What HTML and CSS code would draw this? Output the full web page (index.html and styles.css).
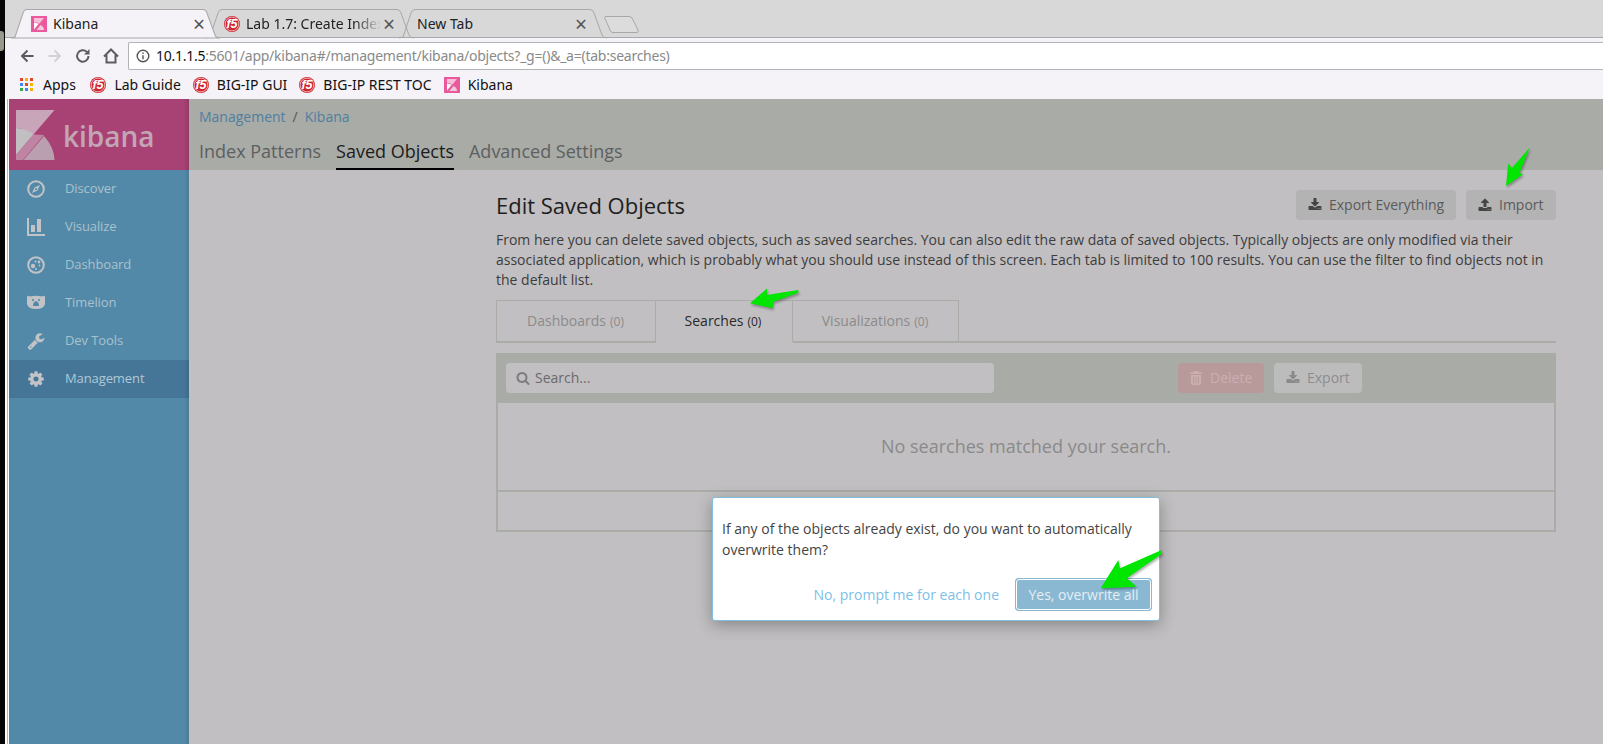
FILE: index.html
```html
<!DOCTYPE html>
<html lang="en">
<head>
<meta charset="utf-8">
<title>Kibana</title>
<link rel="stylesheet" href="styles.css">
</head>
<body>
<svg class="defs" width="0" height="0" aria-hidden="true">
  <symbol id="i-fav" viewBox="0 0 16 16">
    <rect width="16" height="16" fill="#e9599c"/>
    <path d="M3 2h10L8 8 6.400 6.500 3 6z" fill="#f7bfd9"/>
    <path d="M3 6.500Q6 6.500 7.500 8L3 13.500z" fill="#fff"/>
    <path d="M5.500 14l4-5Q13 10.500 13 14z" fill="#f5c9dd"/>
  </symbol>
  <symbol id="i-f5" viewBox="0 0 18 18">
    <circle cx="9" cy="9" r="9" fill="#cf2530"/>
    <circle cx="9" cy="9" r="7.700" fill="none" stroke="#fff" stroke-width=".7"/>
  </symbol>
  <symbol id="i-down" viewBox="0 0 1792 1792"><path fill="currentColor" d="M1344 1344q0-26-19-45t-45-19-45 19-19 45 19 45 45 19 45-19 19-45zm256 0q0-26-19-45t-45-19-45 19-19 45 19 45 45 19 45-19 19-45zm128-224v320q0 40-28 68t-68 28h-1472q-40 0-68-28t-28-68v-320q0-40 28-68t68-28h465l135 136q58 56 136 56t136-56l136-136h464q40 0 68 28t28 68zm-325-569q17 41-14 70l-448 448q-18 19-45 19t-45-19l-448-448q-31-29-14-70 17-39 59-39h256v-448q0-26 19-45t45-19h256q26 0 45 19t19 45v448h256q42 0 59 39z"/></symbol>
  <symbol id="i-up" viewBox="0 0 1792 1792"><path fill="currentColor" d="M1344 1472q0-26-19-45t-45-19-45 19-19 45 19 45 45 19 45-19 19-45zm256 0q0-26-19-45t-45-19-45 19-19 45 19 45 45 19 45-19 19-45zm128-224v320q0 40-28 68t-68 28h-1472q-40 0-68-28t-28-68v-320q0-40 28-68t68-28h427q21 56 70.500 92t110.500 36h256q61 0 110.500-36t70.500-92h427q40 0 68 28t28 68zm-325-648q-17 40-59 40h-256v448q0 26-19 45t-45 19h-256q-26 0-45-19t-19-45v-448h-256q-42 0-59-40-17-39 14-69l448-448q18-19 45-19t45 19l448 448q31 30 14 69z"/></symbol>
  <symbol id="i-search" viewBox="0 0 1792 1792"><path fill="currentColor" d="M1216 832q0-185-131.500-316.500t-316.500-131.500-316.500 131.500-131.500 316.500 131.500 316.500 316.500 131.500 316.500-131.500 131.500-316.500zm512 832q0 52-38 90t-90 38q-54 0-90-38l-343-342q-179 124-399 124-143 0-273.500-55.500t-225-150-150-225-55.500-273.500 55.500-273.500 150-225 225-150 273.500-55.500 273.500 55.500 225 150 150 225 55.500 273.500q0 220-124 399l343 343q37 37 37 90z"/></symbol>
</svg>

<div class="screen">
  <div class="desk-edge"></div>
  <div class="window">
    <div class="tabstrip">
      <div class="tab tab-active">
        <svg class="tab-shape" viewBox="0 0 208 29" preserveAspectRatio="none"><path d="M0 29L4 28L12 4Q13 .5 16 .5H191Q194 .5 195 4L203 26Q204 29 208 29Z"/></svg>
        <svg class="fav"><use href="#i-fav"/></svg>
        <span class="tab-title">Kibana</span>
        <span class="tab-x">×</span>
      </div>
      <div class="tab tab-bg tab-second">
        <svg class="tab-shape" viewBox="0 0 208 29" preserveAspectRatio="none"><path d="M0 29L4 28L12 4Q13 .5 16 .5H191Q194 .5 195 4L203 26Q204 29 208 29"/></svg>
        <svg class="fav" viewBox="0 0 18 18"><use href="#i-f5"/><text class="f5-text" x="9" y="13.500" text-anchor="middle">f5</text></svg>
        <span class="tab-title tab-fade">Lab 1.7: Create Index</span>
        <span class="tab-x">×</span>
      </div>
      <div class="tab tab-bg tab-third">
        <svg class="tab-shape" viewBox="0 0 208 29" preserveAspectRatio="none"><path d="M0 29L4 28L12 4Q13 .5 16 .5H191Q194 .5 195 4L203 26Q204 29 208 29"/></svg>
        <span class="tab-title">New Tab</span>
        <span class="tab-x">×</span>
      </div>
      <svg class="new-tab" width="36" height="19" viewBox="0 0 36 19"><path d="M2 1.500H25Q27 1.500 28 3L34 15Q35 17.500 33 17.500H9Q7 17.500 6.500 16L.8 3Q.3 1.500 2 1.500Z"/></svg>
    </div>

    <div class="toolbar">
      <div class="nav-buttons">
        <svg class="nav-icon" viewBox="0 0 16 16"><path d="M14.500 8H3M8.500 2.500L3 8l5.500 5.500" class="nav-on"/></svg>
        <svg class="nav-icon" viewBox="0 0 16 16"><path d="M1.500 8H13M7.500 2.500L13 8l-5.500 5.500" class="nav-off"/></svg>
        <svg class="nav-icon" viewBox="0 0 16 16"><path d="M13.500 8A5.700 5.700 0 1 1 11.800 3.900" class="nav-on"/><path d="M14.500 1v5.500H9z" class="nav-fill"/></svg>
        <svg class="nav-icon" viewBox="0 0 16 16"><path d="M1 8.500L8 1.500l7 7M3.500 7v7.500h9V7" class="nav-on"/></svg>
      </div>
      <div class="omnibox">
        <svg class="info" viewBox="0 0 14 14"><circle cx="7" cy="7" r="5.800"/><path d="M7 6.200v4M7 3.500v1.500"/></svg>
        <span class="url"><span class="url-host">10.1.1.5</span>:5601/app/kibana#/management/kibana/objects?_g=()&amp;_a=(tab:searches)</span>
      </div>
    </div>

    <div class="bookmarks">
      <span class="bm bm-apps">
        <span class="apps-grid"><i class="r"></i><i class="y"></i><i class="r"></i><i class="b"></i><i class="r"></i><i class="y"></i><i class="g"></i><i class="b"></i><i class="y"></i></span>
        Apps
      </span>
      <span class="bm"><svg class="bm-icon" viewBox="0 0 18 18"><use href="#i-f5"/><text class="f5-text" x="9" y="13.500" text-anchor="middle">f5</text></svg>Lab Guide</span>
      <span class="bm"><svg class="bm-icon" viewBox="0 0 18 18"><use href="#i-f5"/><text class="f5-text" x="9" y="13.500" text-anchor="middle">f5</text></svg>BIG-IP GUI</span>
      <span class="bm"><svg class="bm-icon" viewBox="0 0 18 18"><use href="#i-f5"/><text class="f5-text" x="9" y="13.500" text-anchor="middle">f5</text></svg>BIG-IP REST TOC</span>
      <span class="bm"><svg class="bm-icon"><use href="#i-fav"/></svg>Kibana</span>
    </div>

    <div class="app">
      <div class="app-edge"></div>
      <nav class="sidenav">
        <div class="logo">
          <svg class="logo-mark" viewBox="0 0 39 50">
            <path d="M0 0H38.500L17 25Q9 18 0 18z" fill="#c9a5b9"/>
            <path d="M0 18Q10 18 17.500 24.500L0 45z" fill="#c1bfc1"/>
            <path d="M0 45L17.500 24.500 28 25 7 50H0z" fill="#bf83a3"/>
            <path d="M7.500 50L28 26Q38 37 38.500 50z" fill="#b99fb0"/>
          </svg>
          <span class="logo-word">kibana</span>
        </div>
        <a class="nav-item">
          <svg class="side-icon" viewBox="0 0 18 18"><circle cx="9" cy="9" r="7.800" fill="none" stroke="currentColor" stroke-width="2"/><path fill="currentColor" d="M13 5L10.500 10.500 5 13 7.500 7.500zM9 8a1 1 0 1 0 .01 0z" fill-rule="evenodd"/></svg>
          <span>Discover</span>
        </a>
        <a class="nav-item">
          <svg class="side-icon" viewBox="0 0 18 18"><path fill="currentColor" d="M0 0h2v16h16v2H0zM4 7h4v7H4zM10 1h4v13h-4z"/></svg>
          <span>Visualize</span>
        </a>
        <a class="nav-item">
          <svg class="side-icon" viewBox="0 0 18 18"><circle cx="9" cy="9" r="7.800" fill="none" stroke="currentColor" stroke-width="2"/><circle cx="6" cy="10" r="2.200" fill="currentColor"/><circle cx="8.500" cy="5.500" r="1" fill="currentColor"/><circle cx="12" cy="6" r="1.400" fill="currentColor"/><circle cx="12.500" cy="9.500" r=".9" fill="currentColor"/><circle cx="9" cy="13" r="1" fill="currentColor"/></svg>
          <span>Dashboard</span>
        </a>
        <a class="nav-item">
          <svg class="side-icon" viewBox="0 0 18 18"><path fill="currentColor" fill-rule="evenodd" d="M0 3Q1 1 3 2.500Q9 1 15 2.500Q17 1 18 3V10Q17 15 9 15Q1 15 0 10zM6 5a1 1 0 1 0 .01 0zM12 5a1 1 0 1 0 .01 0zM9 7Q6 8 6 12H12Q12 8 9 7z"/></svg>
          <span>Timelion</span>
        </a>
        <a class="nav-item">
          <svg class="side-icon" viewBox="0 0 1792 1792"><path fill="currentColor" d="M448 1472q0-26-19-45t-45-19-45 19-19 45 19 45 45 19 45-19 19-45zm644-420l-682 682q-37 37-90 37-52 0-91-37l-106-108q-38-36-38-90 0-53 38-91l681-681q39 98 114.500 173.500t173.500 114.500zm634-435q0 39-23 106-47 134-164.500 217.500t-258.500 83.500q-185 0-316.500-131.500t-131.500-316.500 131.500-316.500 316.500-131.500q58 0 121.500 16.500t107.500 46.500q16 11 16 28t-16 28l-293 169v224l193 107q5-3 79-48.500t135.500-81 70.500-35.500q15 0 23.500 10t8.500 25z"/></svg>
          <span>Dev Tools</span>
        </a>
        <a class="nav-item nav-active">
          <svg class="side-icon" viewBox="0 0 1792 1792"><path fill="currentColor" d="M1152 896q0-106-75-181t-181-75-181 75-75 181 75 181 181 75 181-75 75-181zm512-109v222q0 12-8 23t-20 13l-185 28q-19 54-39 91 35 50 107 138 10 12 10 25t-9 23q-27 37-99 108t-94 71q-12 0-26-9l-138-108q-44 23-91 38-16 136-29 186-7 28-36 28h-222q-14 0-24.500-8.500t-11.500-21.500l-28-184q-49-16-90-37l-141 107q-10 9-25 9-14 0-25-11-126-114-165-168-7-10-7-23 0-12 8-23 15-21 51-66.500t54-70.500q-27-50-41-99l-183-27q-13-2-21-12.500t-8-23.500v-222q0-12 8-23t19-13l186-28q14-46 39-92-40-57-107-138-10-12-10-24 0-10 9-23 26-36 98.500-107.500t94.500-71.500q13 0 26 10l138 107q44-23 91-38 16-136 29-186 7-28 36-28h222q14 0 24.500 8.500t11.500 21.500l28 184q49 16 90 37l142-107q9-9 24-9 13 0 25 10 129 119 165 170 7 8 7 22 0 12-8 23-15 21-51 66.500t-54 70.500q26 50 41 98l183 28q13 2 21 12.500t8 23.500z"/></svg>
          <span>Management</span>
        </a>
      </nav>

      <div class="content">
        <header class="app-header">
          <div class="crumbs"><a>Management</a><span class="crumb-sep">/</span><a>Kibana</a></div>
          <div class="section-tabs">
            <a class="section-tab">Index Patterns</a>
            <a class="section-tab section-tab-on">Saved Objects</a>
            <a class="section-tab">Advanced Settings</a>
          </div>
        </header>
        <main class="main">
          <div class="title-row">
            <h1 class="title">Edit Saved Objects</h1>
            <div class="title-actions">
              <button class="btn btn-all"><svg class="btn-icon"><use href="#i-down"/></svg>Export Everything</button>
              <button class="btn btn-import"><svg class="btn-icon"><use href="#i-up"/></svg>Import</button>
            </div>
          </div>
          <p class="intro">From here you can delete saved objects, such as saved searches. You can also edit the raw data of saved objects. Typically objects are only modified via their associated application, which is probably what you should use instead of this screen. Each tab is limited to 100 results. You can use the filter to find objects not in the default list.</p>
          <div class="obj-tabs">
            <a class="obj-tab obj-tab-a">Dashboards <small>(0)</small></a>
            <a class="obj-tab obj-tab-b obj-tab-on">Searches <small>(0)</small></a>
            <a class="obj-tab obj-tab-c">Visualizations <small>(0)</small></a>
          </div>
          <div class="panel-bar">
            <div class="search-box"><svg class="search-icon"><use href="#i-search"/></svg><span>Search...</span></div>
            <div class="bar-actions">
              <button class="btn btn-danger"><svg class="trash" viewBox="0 0 12 14"><path fill="currentColor" d="M4 0h4l1 1.500h3V3H0V1.500h3zM1 4h10v8.500Q11 14 9.500 14h-7Q1 14 1 12.500zM3 5.500v7h1v-7zM5.500 5.500v7h1v-7zM8 5.500v7h1v-7z" fill-rule="evenodd"/></svg>Delete</button>
              <button class="btn btn-off"><svg class="btn-icon"><use href="#i-down"/></svg>Export</button>
            </div>
          </div>
          <div class="panel-table">
            <div class="empty">No searches matched your search.</div>
            <div class="pager"></div>
          </div>
        </main>
      </div>
    </div>
  </div>
</div>

<div class="dialog">
  <p class="dialog-text">If any of the objects already exist, do you want to automatically overwrite them?</p>
  <div class="dialog-actions">
    <a class="dialog-link">No, prompt me for each one</a>
    <button class="dialog-yes">Yes, overwrite all</button>
  </div>
</div>

<div class="desk-blob"></div>

<svg class="arrows" viewBox="0 0 1603 744" aria-hidden="true">
  <polygon points="1530,147.300 1519.300,173.300 1523.300,174 1506,186 1508.300,163.300 1511.700,168.300"/>
  <polygon points="750,303.300 767.300,288.300 766.700,295 798.300,290 798.300,292.700 773.300,301.700 772.700,308.300"/>
  <polygon points="1100.700,588.300 1118.300,560 1120,568.300 1161.700,550 1161.700,554 1126.700,578.300 1136.700,586.700"/>
</svg>
</body>
</html>
```
FILE: styles.css
```css
* { box-sizing: border-box; }
html, body { margin: 0; padding: 0; height: 100%; overflow: hidden; }
body { position: relative; width: 1603px; height: 744px; font-family: "Open Sans", "Noto Sans", sans-serif; font-size: 14px; background: #000; }
.defs { position: absolute; }
a { text-decoration: none; }

.screen { display: flex; height: 744px; }
.desk-edge { width: 5px; flex: none; background: #050505; }
.window { flex: 1; min-width: 0; display: flex; flex-direction: column; background: #f5f3f7; }

/* browser chrome */
.tabstrip { height: 38px; flex: none; display: flex; align-items: flex-end; padding-left: 6px; background: #d8d8d8; border-bottom: 1px solid #a8a8a8; font-family: "Noto Sans", sans-serif; color: #222; }
.tab { position: relative; width: 209px; height: 29px; flex: none; display: flex; align-items: center; margin-bottom: -1px; padding-left: 20px; font-size: 14px; }
.tab-active { z-index: 3; }
.tab-second { margin-left: -14px; width: 208px; z-index: 2; padding-left: 18px; }
.tab-third { margin-left: -15px; width: 208px; z-index: 1; padding-left: 18px; }
.tab-shape { position: absolute; inset: 0; width: 100%; height: 100%; overflow: visible; }
.tab-shape path { fill: none; stroke: #a8a8a8; stroke-width: 1; }
.tab-active .tab-shape path { fill: #f5f3f7; }
.fav { position: relative; width: 16px; height: 16px; flex: none; margin-right: 6px; }
.f5-text { font-family: "Liberation Sans", sans-serif; font-size: 14px; font-weight: 700; font-style: italic; fill: #fff; }
.tab-title { position: relative; white-space: nowrap; overflow: hidden; }
.tab-active .tab-title { width: 138px; }
.tab-second .tab-title { width: 135px; }
.tab-third .tab-title { width: 150px; }
.tab-fade { -webkit-mask-image: linear-gradient(90deg, #000 80%, transparent); mask-image: linear-gradient(90deg, #000 80%, transparent); }
.tab-x { position: relative; font-size: 21px; line-height: 16px; color: #555; margin-left: auto; margin-right: 15px; }
.tab-second .tab-x { margin-right: 19px; }
.tab-third .tab-x { margin-right: 20px; }
.new-tab { flex: none; margin: 0 0 3px -3px; }
.new-tab path { fill: #dcdcdc; stroke: #a8a8a8; }

.toolbar { height: 32px; flex: none; display: flex; align-items: flex-end; padding-left: 14px; background: #f5f3f7; }
.nav-buttons { display: flex; gap: 12px; height: 28px; align-items: center; margin-right: 9px; padding-bottom: 1px; }
.nav-icon { width: 16px; height: 16px; flex: none; }
.nav-on { fill: none; stroke: #5c5c5c; stroke-width: 2; }
.nav-off { fill: none; stroke: #d2d2d2; stroke-width: 2; }
.nav-fill { fill: #5c5c5c; }
.omnibox { flex: 1; height: 28px; display: flex; align-items: center; background: #fff; border: 1px solid #b4b4b4; border-right: 0; border-radius: 2px 0 0 2px; padding-left: 7px; font-family: "Noto Sans", sans-serif; font-size: 14px; letter-spacing: -.25px; color: #8a8a8a; }
.info { width: 14px; height: 14px; flex: none; margin-right: 6px; }
.info circle, .info path { fill: none; stroke: #555; stroke-width: 1.400; }
.url { white-space: nowrap; padding-bottom: 1px; }
.url-host { color: #111; }

.bookmarks { height: 29px; flex: none; display: flex; align-items: center; gap: 12px; padding-left: 15px; background: #f5f3f7; font-family: "Noto Sans", sans-serif; font-size: 14px; color: #111; }
.bm { display: flex; align-items: center; white-space: nowrap; }
.bm-apps { margin-right: 2.500px; }
.bm-icon { width: 16px; height: 16px; flex: none; margin-right: 8px; }
.apps-grid { display: grid; grid-template-columns: repeat(3, 3px); gap: 2px; margin-right: 10px; }
.apps-grid i { width: 3px; height: 3px; display: block; }
.apps-grid .r { background: #e0452f; }
.apps-grid .y { background: #f2b600; }
.apps-grid .g { background: #34a853; }
.apps-grid .b { background: #4285f4; }

/* kibana */
.app { flex: 1; min-height: 0; display: flex; background: #c1bfc1; }
.app-edge { width: 4px; flex: none; background: linear-gradient(90deg, #fff 0 2px, #b5b5b5 2px 3px, #fff 3px); }
.sidenav { width: 180px; flex: none; background: #5389a8; box-shadow: inset -5px 0 4px -3px rgba(0,0,0,.12); color: #a9c1cd; }
.logo { height: 71px; display: flex; align-items: center; padding-left: 7px; background: #a84274; box-shadow: inset -5px 0 4px -3px rgba(0,0,0,.15); }
.logo-mark { width: 39px; height: 50px; flex: none; margin-right: 8px; }
.logo-word { font-family: "Open Sans", sans-serif; font-size: 28px; font-weight: 600; line-height: 32px; color: #c3a6b6; padding-top: 3px; }
.nav-item { height: 38px; display: flex; align-items: center; padding-left: 18px; font-size: 13px; letter-spacing: -.1px; color: #a9c1cd; }
.nav-item span { margin-left: 20px; padding-bottom: 2px; }
.side-icon { width: 18px; height: 18px; flex: none; color: #c1c3c7; }
.nav-active { background: #457698; box-shadow: inset -5px 0 4px -3px rgba(0,0,0,.12); color: #afc8d5; }

.content { flex: 1; min-width: 0; display: flex; flex-direction: column; }
.app-header { height: 71px; flex: none; background: #a9aba7; padding-left: 10px; }
.crumbs { padding-top: 8px; height: 36px; line-height: 20px; font-size: 14px; color: #4f7f9f; }
.crumb-sep { color: #555; margin: 0 7px; }
.section-tabs { display: flex; gap: 15px; }
.section-tab { display: block; height: 35px; padding-top: 1px; font-size: 18px; line-height: 30px; color: #5d5f60; }
.section-tab-on { color: #1c1c1c; border-bottom: 2px solid #000; }

.main { flex: 1; padding: 20px 47px 0 307px; }
.title-row { display: flex; justify-content: space-between; align-items: center; height: 30px; }
.title { margin: 0; font-size: 22px; font-weight: 400; line-height: 30px; color: #1e1e1e; }
.title-actions { display: flex; gap: 10px; }
.btn { display: inline-flex; align-items: center; height: 30px; padding: 0 11px 2px 12px; border: 0; border-radius: 4px; background: #b4b3b4; font: inherit; font-size: 14px; white-space: nowrap; color: #5a5a5a; }
.btn-all { width: 160px; }
.btn-import { width: 90px; }
.btn-icon { width: 14px; height: 14px; flex: none; margin-right: 7px; margin-top: 2px; color: #454545; }
.intro { margin: 10px 0; font-size: 14px; line-height: 20px; color: #3d3d3d; }

.obj-tabs { display: flex; height: 43px; border-bottom: 2px solid #aaaca8; }
.obj-tab { display: flex; align-items: baseline; justify-content: center; gap: 4px; height: 43px; padding-top: 10px; border: 1px solid #aaaca8; border-bottom-width: 2px; border-left-width: 0; font-size: 14px; line-height: 20px; color: #8b8b8b; }
.obj-tab small { font-size: 12px; }
.obj-tab-a { width: 160px; border-left-width: 1px; padding-right: 1px; }
.obj-tab-b { width: 137px; padding-right: 2px; }
.obj-tab-c { width: 166px; padding-right: 1px; }
.obj-tab-on { color: #2a2a2a; border-bottom-color: #c1bfc1; }

.panel-bar { display: flex; align-items: center; height: 50px; margin-top: 10px; padding: 0 10px; background: #a9aba7; }
.search-box { width: 488px; height: 30px; display: flex; align-items: center; padding: 0 0 2px 10px; border-radius: 4px; background: #c1bfc1; color: #6a6a6a; font-size: 14px; }
.search-icon { width: 14px; height: 14px; flex: none; margin: 2px 5px 0 0; color: #7d7d7d; }
.bar-actions { display: flex; gap: 10px; margin-left: 184px; }
.btn-danger { width: 86px; background: #b99a9b; color: #c9afb0; }
.btn-danger .trash { width: 12px; height: 14px; flex: none; margin: 2px 8px 0 0; color: #c9afb0; }
.btn-off { width: 88px; background: #bdbcbd; color: #8d8d8d; }
.btn-off .btn-icon { color: #8a8a8a; }

.panel-table { border: 2px solid #aaaca8; border-top: 0; height: 129px; display: flex; flex-direction: column; }
.empty { height: 89px; padding-bottom: 2px; border-bottom: 2px solid #aaaca8; display: flex; align-items: center; justify-content: center; font-size: 18px; color: #8a8a8a; }
.pager { flex: 1; }

/* overlays */
.dialog { position: absolute; left: 712px; top: 497px; width: 448px; height: 124px; padding: 20px 9px 0; background: #fff; border: 1px solid #7fbfdd; border-radius: 3px; box-shadow: 0 4px 16px rgba(0,0,0,.3); }
.dialog-text { margin: 0; font-size: 14px; line-height: 21px; color: #444; }
.dialog-actions { display: flex; justify-content: flex-end; align-items: center; gap: 16px; margin-top: 18px; margin-right: -2px; }
.dialog-link { font-size: 14px; color: #7cc0e8; }
.dialog-yes { width: 137px; height: 33px; padding: 0; border: 2px solid #8ab8d2; border-radius: 4px; background: #8ab8d2; font: inherit; font-size: 14px; color: #e4eef4; position: relative; }
.dialog-yes::after { content: ""; position: absolute; inset: -2px; border: 1px solid #8ab8d2; border-radius: 4px; box-shadow: inset 0 0 0 1px #fff; }
.desk-blob { position: absolute; left: 0; top: 31px; width: 4px; height: 20px; background: #9a9a8c; border-radius: 0 3px 3px 0; }
.arrows { position: absolute; inset: 0; width: 1603px; height: 744px; pointer-events: none; }
.arrows polygon { fill: #00e600; filter: drop-shadow(1px 2px 1px rgba(0,0,0,.3)); }
```
